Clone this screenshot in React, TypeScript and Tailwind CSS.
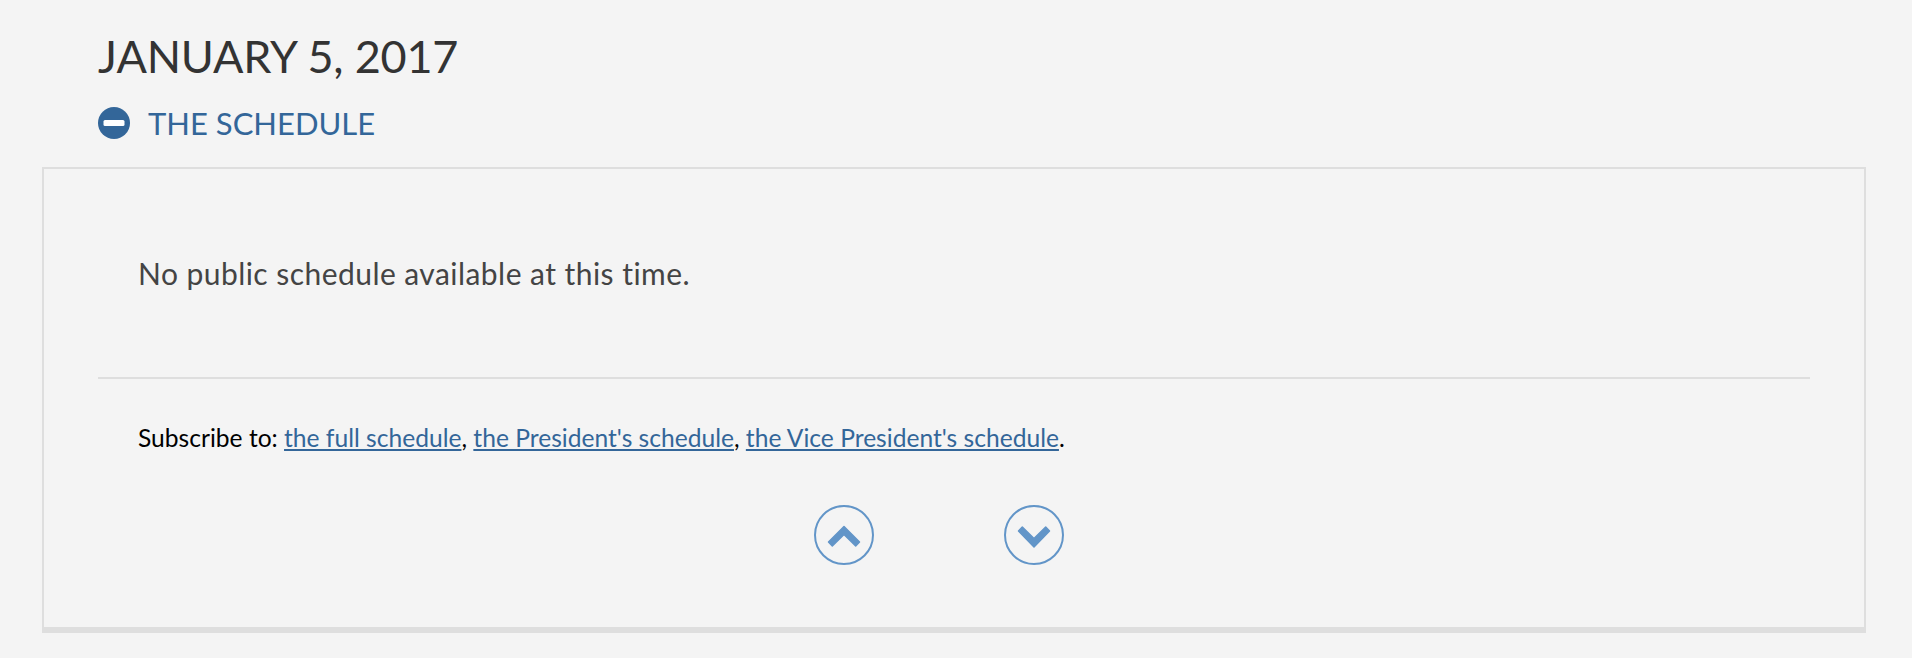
export default function App() {
  return (
    <div className="min-h-[658px] bg-[#f4f4f4] font-['Lato','Open_Sans',sans-serif] pt-[26px]">
      <div className="px-[98px]">
        <h1 className="text-[45px] leading-[60px] font-normal tracking-[-0.2px] text-[#333333]">JANUARY 5, 2017</h1>
        <a href="#" className="mt-[17px] flex items-center gap-[18px] text-[#336699]">
          <svg width="32" height="32" viewBox="0 0 32 32">
            <circle cx="16" cy="16" r="16" fill="#336699" />
            <rect x="5.5" y="13" width="21" height="6" rx="1.5" fill="#ffffff" />
          </svg>
          <span className="text-[31px] leading-[40px]">THE SCHEDULE</span>
        </a>
      </div>
      <div className="mt-[24px] mx-[42px] w-[1824px] h-[466px] border-x-2 border-t-2 border-b-[6px] border-[#dedede] px-[54px]">
        <p className="pt-[84px] px-[40px] text-[30px] leading-[40px] tracking-[0.45px] text-[#444444]">
          No public schedule available at this time.
        </p>
        <div className="mt-[84px] border-t-2 border-[#dedede] pt-[43px] px-[40px] text-[24.6px] leading-[32px] text-black">
          Subscribe to:{" "}
          <a href="#" className="underline text-[#336699]">the full schedule</a>,{" "}
          <a href="#" className="underline text-[#336699]">the President's schedule</a>,{" "}
          <a href="#" className="underline text-[#336699]">the Vice President's schedule</a>.
        </div>
        <div className="mt-[51px] pr-[30px] flex justify-center gap-[130px]">
          <a href="#">
            <svg width="60" height="60" viewBox="0 0 60 60">
              <circle cx="30" cy="30" r="29" fill="none" stroke="#6295c8" strokeWidth="2" />
              <polygon points="30,21.5 45.5,37 41.7,41 30,29.5 18.3,41 14.5,37" fill="#6295c8" stroke="#6295c8" strokeWidth="1.5" strokeLinejoin="round" />
            </svg>
          </a>
          <a href="#">
            <svg width="60" height="60" viewBox="0 0 60 60">
              <circle cx="30" cy="30" r="29" fill="none" stroke="#6295c8" strokeWidth="2" />
              <polygon points="30,33.5 41.7,22 45.5,26 30,42 14.5,26 18.3,22" fill="#6295c8" stroke="#6295c8" strokeWidth="1.5" strokeLinejoin="round" />
            </svg>
          </a>
        </div>
      </div>
    </div>
  );
}
